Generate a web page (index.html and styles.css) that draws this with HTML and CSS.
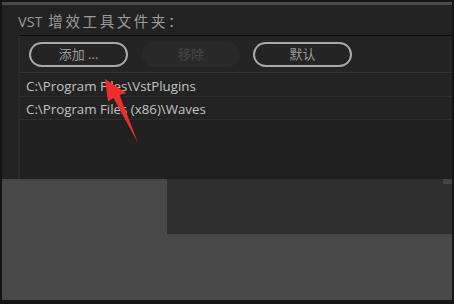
FILE: index.html
```html
<!DOCTYPE html>
<html>
<head>
<meta charset="utf-8">
<link rel="stylesheet" href="styles.css">
</head>
<body>
<div class="window">
  <div class="topline"></div>
  <div class="panel">
    <div class="title">VST <span class="cjk">增效工具文件夹：</span></div>
    <div class="box">
      <div class="toolbar">
        <div class="btn">添加 ...</div>
        <div class="btn disabled">移除</div>
        <div class="btn">默认</div>
      </div>
      <div class="list">
        <div class="row">C:\Program Files\VstPlugins</div>
        <div class="row">C:\Program Files (x86)\Waves</div>
      </div>
    </div>
  </div>
  <div class="bottom">
    <div class="dark"><div class="nub"></div></div>
  </div>
</div>
<svg class="arrow" width="454" height="304" viewBox="0 0 454 304">
  <path d="M105 79 L126 93 L119.5 95 L138 143 L113.5 98 L108 101.5 Z" fill="#ee2e2e"/>
</svg>
</body>
</html>
```
FILE: styles.css
```css
html, body {
  margin: 0;
  padding: 0;
  background: #141414;
  width: 454px;
  height: 304px;
  overflow: hidden;
}
body {
  position: relative;
}
.window {
  margin: 2px 0 0 2px;
  width: 450px;
  height: 298px;
  display: flex;
  flex-direction: column;
  font-family: "Open Sans", "Noto Sans CJK SC", sans-serif;
}
.topline {
  height: 3px;
  background: #4b4b4b;
}
.panel {
  height: 174px;
  background: #222222;
  padding-left: 16px;
  box-sizing: border-box;
  display: flex;
  flex-direction: column;
}
.title {
  height: 30px;
  box-sizing: border-box;
  padding-top: 6px;
  line-height: 22px;
  font-size: 14.5px;
  color: #9c9c9c;
}
.cjk {
  letter-spacing: 2.6px;
  margin-left: 2px;
}
.box {
  flex: 1;
  border-top: 1px solid #0b0b0b;
  border-left: 2px solid #2a2a2a;
  display: flex;
  flex-direction: column;
}
.toolbar {
  height: 37px;
  box-sizing: border-box;
  padding: 6px 0 0 9px;
  display: flex;
  gap: 14px;
  background: #242424;
  border-bottom: 1px solid #333333;
}
.btn {
  width: 99px;
  height: 25px;
  box-sizing: border-box;
  border: 2px solid #a8a8a8;
  border-radius: 13px;
  color: #9a9a9a;
  font-size: 13px;
  line-height: 21px;
  text-align: center;
}
.btn.disabled {
  width: 98px;
  border-color: transparent;
  background: #292929;
  color: #464646;
  margin-right: -1px;
}
.list {
  flex: 1;
  background: #202020;
  padding-top: 1px;
}
.row {
  height: 23px;
  line-height: 24px;
  box-sizing: border-box;
  border-bottom: 1px solid #2c2c2c;
  padding-left: 6px;
  font-size: 13.3px;
  color: #c2c2c2;
  background: #232323;
}
.bottom {
  flex: 1;
  background: #484848;
  display: flex;
  justify-content: flex-end;
  align-items: flex-start;
}
.dark {
  position: relative;
  width: 285px;
  height: 54px;
  background: #2f2f2f;
  border-bottom: 1px solid #2c2c2c;
}
.nub {
  position: absolute;
  right: 0;
  top: 0;
  width: 9px;
  height: 5px;
  background: #444444;
}
.arrow {
  position: absolute;
  left: 0;
  top: 0;
}
```
